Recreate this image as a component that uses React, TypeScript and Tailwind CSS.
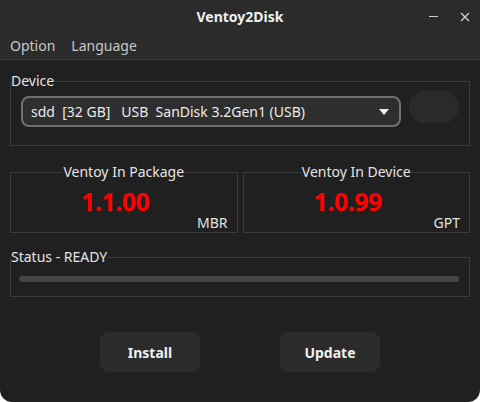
import React from "react";

const font = { fontFamily: '"Noto Sans", "Open Sans", sans-serif' };

function Legend({ children, center }: { children: React.ReactNode; center?: boolean }) {
  return (
    <legend className={`px-0 text-[14px] leading-[20px] text-[#e4e4e4] ${center ? "mx-auto" : ""}`}>
      {children}
    </legend>
  );
}

function VersionBox({ title, version, kind }: { title: string; version: string; kind: string }) {
  return (
    <fieldset className="flex-1 border border-[#3a3a3a] m-0 min-w-0 p-0">
      <Legend center>{title}</Legend>
      <div className="px-[9px] pb-[1px]">
        <div className="mt-[4px] h-[30px] text-center pr-[17px] text-[25px] leading-[30px] font-bold tracking-[-0.5px] text-[#ff0000]">
          {version}
        </div>
        <div className="-mt-[1px] text-right text-[14px] leading-[16px] text-[#e4e4e4]">{kind}</div>
      </div>
    </fieldset>
  );
}

export default function App() {
  return (
    <div className="bg-white w-[480px] h-[402px]" style={font}>
      <div className="w-[480px] h-[402px] bg-[#202020] rounded-b-[12px] overflow-hidden flex flex-col">
        <div className="bg-[#2b2b2b] border-b border-[#3a3a3a]">
          <div className="relative h-[32px] flex items-center justify-center">
            <span className="text-[14px] font-bold text-[#f0f0f0]">Ventoy2Disk</span>
            <div className="absolute right-[10px] top-0 h-[32px] flex items-center gap-[22px]">
              <span className="block w-[9px] h-[1px] bg-[#d0d0d0] mt-[1px]" />
              <svg width="10" height="10" viewBox="0 0 10 10" className="mt-[1px]">
                <path d="M1 1 L9 9 M9 1 L1 9" stroke="#d0d0d0" strokeWidth="1.3" />
              </svg>
            </div>
          </div>
          <div className="h-[27px] flex items-center gap-[16px] px-[10px] text-[14px] text-[#c8c8c8]">
            <span>Option</span>
            <span>Language</span>
          </div>
        </div>

        <div className="px-[10px] pt-[11px] flex flex-col">
          <fieldset className="border border-[#3a3a3a] p-0 m-0 min-w-0">
            <Legend>Device</Legend>
            <div className="flex items-start gap-[8px] px-[10px] pb-[18px]">
              <div className="mt-[5px] w-[380px] h-[31px] rounded-[8px] border-2 border-[#707070] bg-[#2e2e2e] flex items-center justify-between pl-[8px] pr-[10px]">
                <span className="text-[14px] text-[#ececec] whitespace-pre">sdd  [32 GB]   USB  SanDisk 3.2Gen1 (USB)</span>
                <svg width="10" height="6" viewBox="0 0 10 6">
                  <path d="M0 0 L10 0 L5 6 Z" fill="#f0f0f0" />
                </svg>
              </div>
              <div className="w-[50px] h-[32px] rounded-full bg-[#2a2a2a]" />
            </div>
          </fieldset>

          <div className="flex gap-[5px] mt-[16px]">
            <VersionBox title="Ventoy In Package" version="1.1.00" kind="MBR" />
            <VersionBox title="Ventoy In Device" version="1.0.99" kind="GPT" />
          </div>

          <fieldset className="border border-[#3a3a3a] m-0 min-w-0 p-0 mt-[14px]">
            <Legend>Status - READY</Legend>
            <div className="pl-[8px] pr-[10px] pb-[14px] pt-[9px]">
              <div className="h-[6px] rounded-full bg-[#454545]" />
            </div>
          </fieldset>

          <div className="flex justify-center gap-[80px] mt-[35px]">
            <div className="w-[100px] h-[40px] rounded-[9px] bg-[#2b2b2b] flex items-center justify-center text-[14px] font-bold text-[#f0f0f0]">
              Install
            </div>
            <div className="w-[100px] h-[40px] rounded-[9px] bg-[#2b2b2b] flex items-center justify-center text-[14px] font-bold text-[#f0f0f0]">
              Update
            </div>
          </div>
        </div>
      </div>
    </div>
  );
}
